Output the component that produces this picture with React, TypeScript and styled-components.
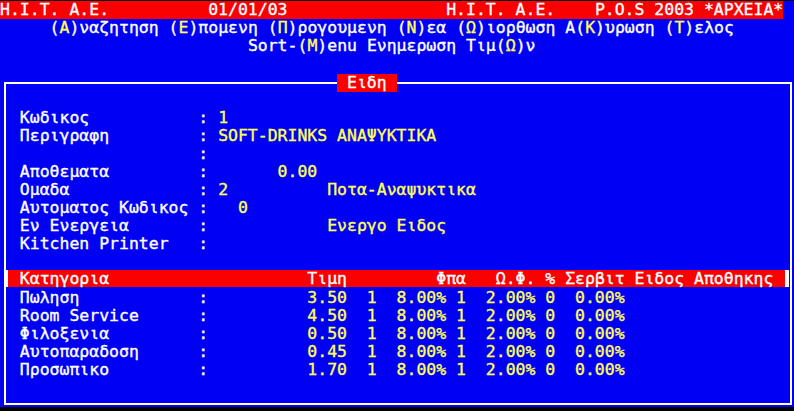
import React from 'react';
import styled, { createGlobalStyle } from 'styled-components';

const GlobalStyle = createGlobalStyle`
  html, body {
    margin: 0;
    padding: 0;
    background: #000;
  }
`;

const BLUE = '#0000f2';
const RED = '#fa0000';
const YELLOW = '#ffff55';
const WHITE = '#ffffff';

const Screen = styled.div`
  width: 794px;
  margin-top: 1px;
  padding-bottom: 2px;
  background: ${BLUE};
  color: ${WHITE};
  font-family: 'DejaVu Sans Mono', 'Liberation Mono', monospace;
  font-size: 16.485px;
  line-height: 18px;
  white-space: pre;
  -webkit-text-stroke: 0.35px currentColor;
`;

const TopBar = styled.div`
  display: grid;
  grid-template-columns: 21ch 24ch 15ch 19ch;
  width: 79ch;
  height: 18px;
  background: ${RED};
`;

const MenuLine = styled.div<{ $indent: number }>`
  height: 18px;
  padding-left: ${(p) => p.$indent}ch;
`;

const Key = styled.span`
  color: ${YELLOW};
`;

const Frame = styled.div`
  position: relative;
  margin: 27px 2px 0 4px;
  padding: 25px 0 24px;
  border: 2px solid ${WHITE};
`;

const FrameTitle = styled.div`
  position: absolute;
  top: -10px;
  left: calc(34ch - 6px);
  height: 18px;
  padding: 0 1ch;
  background: ${RED};
`;

const FieldRow = styled.div`
  display: grid;
  grid-template-columns: 18ch 2ch 11ch auto;
  height: 18px;
  padding-left: calc(2ch - 6px);
`;

const Value = styled.span<{ $indent?: number; $wide?: boolean }>`
  color: ${YELLOW};
  padding-left: ${(p) => p.$indent ?? 0}ch;
  grid-column: ${(p) => (p.$wide ? 'span 2' : 'auto')};
`;

const TableHead = styled.div`
  display: grid;
  grid-template-columns: 29ch 11ch 8ch auto;
  height: 17px;
  margin: 17px 1px 2px 0;
  padding-left: calc(2ch - 8px);
  background: ${RED};
  border-left: 2px solid ${WHITE};
  border-right: 4px solid ${WHITE};
`;

const TableRow = styled.div`
  display: grid;
  grid-template-columns: 18ch 11ch 6ch 3ch 6ch 3ch 6ch 3ch auto;
  height: 18px;
  padding-left: calc(2ch - 6px);
`;

const Num = styled.span`
  color: ${YELLOW};
`;

type Field = {
  label: string;
  value?: string;
  indent?: number;
  extra?: string;
};

const fields: Field[] = [
  { label: 'Κωδικος', value: '1' },
  { label: 'Περιγραφη', value: 'SOFT-DRINKS ΑΝΑΨΥΚΤΙΚΑ' },
  { label: '' },
  { label: 'Αποθεματα', value: '0.00', indent: 6 },
  { label: 'Ομαδα', value: '2', extra: 'Ποτα-Αναψυκτικα' },
  { label: 'Αυτοματος Κωδικος', value: '0', indent: 2 },
  { label: 'Εν Ενεργεια', extra: 'Ενεργο Ειδος' },
  { label: 'Kitchen Printer' },
];

const categories = [
  { name: 'Πωληση', price: '3.50' },
  { name: 'Room Service', price: '4.50' },
  { name: 'Φιλοξενια', price: '0.50' },
  { name: 'Αυτοπαραδοση', price: '0.45' },
  { name: 'Προσωπικο', price: '1.70' },
];

const Hot: React.FC<{ pre?: string; k: string; post: string }> = ({ pre = '', k, post }) => (
  <>
    {pre}(<Key>{k}</Key>){post}
  </>
);

const App: React.FC = () => {
  return (
    <>
      <GlobalStyle />
      <Screen>
        <TopBar>
          <span>H.I.T. A.E.</span>
          <span>01/01/03</span>
          <span>H.I.T. A.E.</span>
          <span>P.O.S 2003 *ΑΡΧΕΙΑ*</span>
        </TopBar>
        <MenuLine $indent={5}>
          <Hot k="Α" post="ναζητηση " />
          <Hot k="Ε" post="πομενη " />
          <Hot k="Π" post="ρογουμενη " />
          <Hot k="Ν" post="εα " />
          <Hot k="Ω" post="ιορθωση " />
          <Hot pre="Α" k="Κ" post="υρωση " />
          <Hot k="Τ" post="ελος" />
        </MenuLine>
        <MenuLine $indent={25}>
          <Hot pre="Sort-" k="M" post="enu Ενημερωση " />
          <Hot pre="Τιμ" k="Ω" post="ν" />
        </MenuLine>

        <Frame>
          <FrameTitle>Ειδη</FrameTitle>
          {fields.map((f, i) => (
            <FieldRow key={i}>
              <span>{f.label}</span>
              <span>:</span>
              <Value $indent={f.indent} $wide={!f.extra}>
                {f.value ?? ''}
              </Value>
              {f.extra && <Value>{f.extra}</Value>}
            </FieldRow>
          ))}

          <TableHead>
            <span>Κατηγορια</span>
            <span>Τιμη</span>
            <span>  Φπα</span>
            <span>Ω.Φ. % Σερβιτ Ειδος Αποθηκης</span>
          </TableHead>
          {categories.map((c) => (
            <TableRow key={c.name}>
              <span>{c.name}</span>
              <span>:</span>
              <Num>{c.price}</Num>
              <Num>1</Num>
              <Num>8.00%</Num>
              <Num>1</Num>
              <Num>2.00%</Num>
              <Num>0</Num>
              <Num>0.00%</Num>
            </TableRow>
          ))}
        </Frame>
      </Screen>
    </>
  );
};

export default App;
